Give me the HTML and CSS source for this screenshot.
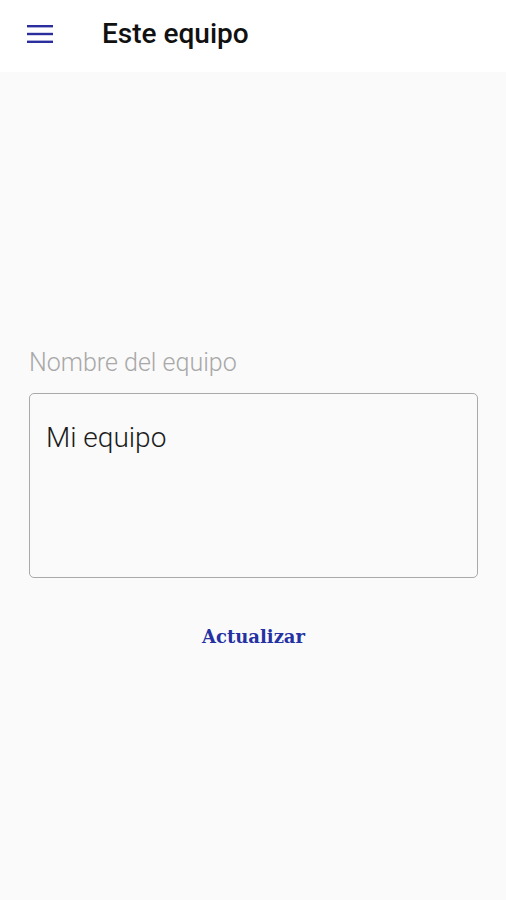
FILE: index.html
```html
<!DOCTYPE html>
<html lang="es">
<head>
  <meta charset="UTF-8">
  <meta name="viewport" content="width=device-width, initial-scale=1">
  <title>Este equipo</title>
  <link rel="stylesheet" href="styles.css">
</head>
<body>

<div class="topbar">
  <button class="menu-btn" aria-label="Menú">
    <svg width="26" height="18" viewBox="0 0 26 18">
      <rect x="0" y="0" width="26" height="2.4" fill="#2b2f9e"/>
      <rect x="0" y="7.8" width="26" height="2.4" fill="#2b2f9e"/>
      <rect x="0" y="15.6" width="26" height="2.4" fill="#2b2f9e"/>
    </svg>
  </button>
  <h1>Este equipo</h1>
</div>

<div class="content">
  <label class="field-label" for="teamName">Nombre del equipo</label>
  <div class="field-box" id="teamName">Mi equipo</div>
  <button class="update-btn">Actualizar</button>
</div>

</body>
</html>
```

FILE: styles.css
```css
body {
  margin: 0;
  background-color: #fafafa;
  font-family: Roboto, "Noto Sans", sans-serif;
  height: 900px;
}

.topbar {
  background-color: #ffffff;
  height: 72px;
  display: flex;
  align-items: center;
}

.menu-btn {
  background: none;
  border: none;
  padding: 0;
  margin: 0 0 4px 27px;
  width: 26px;
  height: 18px;
  display: flex;
  cursor: pointer;
}

.topbar h1 {
  margin: 0 0 6px 49px;
  font-size: 28px;
  font-weight: 500;
  color: #111;
}

.content {
  padding: 276px 28px 0 29px;
  display: flex;
  flex-direction: column;
}

.field-label {
  font-size: 25px;
  font-weight: 300;
  color: #a8a8a8;
  line-height: 30px;
}

.field-box {
  box-sizing: border-box;
  margin-top: 15px;
  height: 185px;
  border: 1.5px solid #a9a9a9;
  border-radius: 5px;
  padding: 28px 16px 16px;
  font-size: 28px;
  font-weight: 300;
  line-height: 32px;
  color: #1c1c1c;
}

.update-btn {
  align-self: center;
  margin-top: 44px;
  background: none;
  border: none;
  padding: 4px 8px;
  font-family: "DejaVu Serif", serif;
  font-weight: bold;
  font-size: 18px;
  color: #2431a3;
  cursor: pointer;
}
```
